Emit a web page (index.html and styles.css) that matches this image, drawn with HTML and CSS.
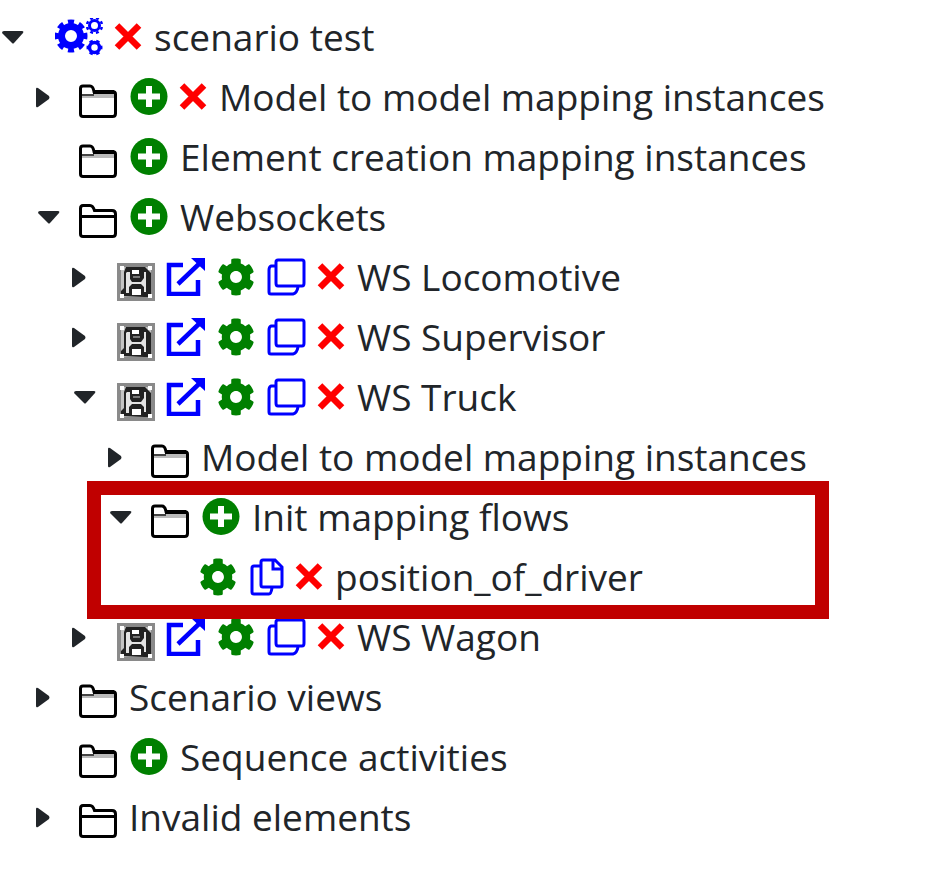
FILE: index.html
```html
<!DOCTYPE html>
<html lang="en">
<head>
  <meta charset="UTF-8" />
  <meta name="viewport" content="width=device-width, initial-scale=1.0" />
  <title>Scenario</title>
  <link rel="stylesheet" href="styles.css">
</head>
<body>
  <!-- icon sprite -->
  <svg class="sprite" aria-hidden="true">
    <symbol id="down" viewBox="0 0 22 13"><path d="M0 2Q0 0 2 0H20Q22 0 21 2L12 12Q11 13 10 12Z"/></symbol>
    <symbol id="right" viewBox="0 0 14 21"><path d="M0 2Q0 0 2 1L13 9Q14 10.500 13 12L2 20Q0 21 0 19Z"/></symbol>
    <symbol id="cross" viewBox="0 0 28 38"><path d="M3 7.500L25 29.500M25 7.500L3 29.500" fill="none" stroke="currentColor" stroke-width="6.500"/></symbol>
    <symbol id="plus" viewBox="0 0 40 38"><circle cx="21" cy="18.500" r="18.500"/><path d="M21 8V29M10 18.500H32" stroke="#fff" stroke-width="6"/></symbol>
    <symbol id="cog" viewBox="0 0 512 512"><path d="M487.400 315.700l-42.600-24.600c4.300-23.200 4.300-47 0-70.200l42.600-24.600c4.900-2.800 7.100-8.600 5.500-14-11.100-35.600-30-67.800-54.700-94.600-3.800-4.100-10-5.100-14.800-2.300L380.800 110c-17.900-15.400-38.500-27.300-60.800-35.100V25.800c0-5.600-3.900-10.500-9.400-11.700-36.700-8.200-74.300-7.800-109.200 0-5.500 1.200-9.400 6.100-9.400 11.700V75c-22.200 7.900-42.800 19.800-60.800 35.100L88.700 85.500c-4.900-2.800-11-1.900-14.800 2.300-24.700 26.700-43.600 58.900-54.700 94.600-1.700 5.400.6 11.200 5.500 14L67.300 221c-4.300 23.200-4.300 47 0 70.200l-42.600 24.600c-4.900 2.800-7.100 8.600-5.500 14 11.100 35.600 30 67.800 54.700 94.600 3.800 4.100 10 5.100 14.800 2.300l42.600-24.600c17.900 15.400 38.500 27.300 60.800 35.100v49.200c0 5.600 3.900 10.500 9.400 11.700 36.700 8.200 74.300 7.800 109.200 0 5.500-1.200 9.400-6.100 9.400-11.700v-49.200c22.200-7.900 42.800-19.800 60.800-35.100l42.600 24.600c4.900 2.800 11 1.900 14.800-2.300 24.700-26.700 43.600-58.900 54.700-94.600 1.500-5.500-.7-11.300-5.600-14.100zM256 336c-44.100 0-80-35.900-80-80s35.900-80 80-80 80 35.900 80 80-35.900 80-80 80z"/></symbol>
    <symbol id="cogs" viewBox="0 0 48 38">
      <g fill="none" stroke="currentColor">
        <circle cx="16" cy="18" r="9.500" stroke-width="7"/>
        <circle cx="16" cy="18" r="14" stroke-width="5" pathLength="16" stroke-dasharray="1.100 .9" stroke-dashoffset=".55"/>
        <circle cx="39.500" cy="7.500" r="5" stroke-width="3"/>
        <circle cx="39.500" cy="7.500" r="7.500" stroke-width="2.500" pathLength="16" stroke-dasharray="1 1" stroke-dashoffset="1.500"/>
        <circle cx="39.500" cy="29.500" r="5" stroke-width="3.500"/>
        <circle cx="39.500" cy="29.500" r="7" stroke-width="2" pathLength="12" stroke-dasharray="1 1" stroke-dashoffset=".5"/>
      </g>
    </symbol>
    <symbol id="folder" viewBox="0 0 38 34">
      <path d="M3 10H35V14H3Z" fill="#bbb"/>
      <path d="M1.500 30V4.500Q1.500 2 4 2H11Q14 2 15 7.500H33Q36.500 7.500 36.500 10V29.500Q36.500 32.500 33.500 32.500H4Q1.500 32.500 1.500 30Z" fill="none" stroke="#000" stroke-width="3"/>
      <path d="M14 8H35" fill="none" stroke="#000" stroke-width="4"/>
      <path d="M3 11H15" fill="none" stroke="#444" stroke-width="2"/>
    </symbol>
    <symbol id="folder-open" viewBox="0 0 38 34"><path d="M1.500 30V4.500Q1.500 1.500 4 1.500H11Q14 1.500 15.500 6.500H33Q36.500 6.500 36.500 10V29.500Q36.500 32.500 33.500 32.500H4Q1.500 32.500 1.500 30ZM2 12.500H36" fill="none" stroke="#000" stroke-width="3"/></symbol>
    <symbol id="save" viewBox="0 0 38 38">
      <path d="M0 0H38V38H0Z" fill="#8a8a8a"/>
      <path d="M4 4H34V34H4Z" fill="#c4c4c4"/>
      <path d="M9 4H28L34 10V34H27L4 33V28L7 25V9Z" fill="#222"/>
      <path d="M10 9H13V16L15 19H24L27 15V9H29V29H27V24L24 21H15L12 24V30H9V10Z" fill="#e4e4e4"/>
      <path d="M15 7H22V11H15ZM15 26H24V32H15Z" fill="#fff"/>
      <path d="M16 14H23" stroke="#777" stroke-width="2"/>
      <path d="M3 3H7V7H3ZM31 3H35V7H31ZM3 31H7V35H3ZM31 31H35V35H31Z" fill="#fff"/>
    </symbol>
    <symbol id="open" viewBox="0 0 40 38"><path d="M17 7H3V36H32V22M12 26L35 4" fill="none" stroke="currentColor" stroke-width="4.500"/><path d="M25 0H39V13Z"/></symbol>
    <symbol id="clone" viewBox="0 0 40 38"><path d="M12 2H36Q38 2 38 4V25Q38 28 36 28H12Q10 28 10 25V4Q10 2 12 2ZM9 8H5Q3 9 3 12V34Q3 36 5 36H27Q31 35 32 29" fill="none" stroke="currentColor" stroke-width="3"/></symbol>
    <symbol id="copy" viewBox="0 0 36 38"><path d="M15 2H27L34 9V27Q34 29 32 29H15Q13 29 13 27V4Q13 2 15 2ZM25 2V11H34M12 8H6Q4 8 4 10V34Q4 36 6 36H21Q23 36 24 30" fill="none" stroke="currentColor" stroke-width="3"/></symbol>
  </svg>

  <ul class="tree">
    <li>
      <div class="row">
        <button class="toggle open" aria-label="Collapse"><svg><use href="#down"/></svg></button>
        <button class="icon cogs shifted" aria-label="Run"><svg><use href="#cogs"/></svg></button>
        <button class="icon cross" aria-label="Delete"><svg><use href="#cross"/></svg></button>
        <a href="#">scenario test</a>
      </div>
      <ul>
        <li>
          <div class="row">
            <button class="toggle" aria-label="Expand"><svg><use href="#right"/></svg></button>
            <span class="icon folder"><svg><use href="#folder"/></svg></span>
            <button class="icon plus" aria-label="Add"><svg><use href="#plus"/></svg></button>
            <button class="icon cross" aria-label="Delete"><svg><use href="#cross"/></svg></button>
            <a href="#">Model to model mapping instances</a>
          </div>
        </li>
        <li>
          <div class="row">
            <span class="toggle"></span>
            <span class="icon folder"><svg><use href="#folder"/></svg></span>
            <button class="icon plus" aria-label="Add"><svg><use href="#plus"/></svg></button>
            <a href="#">Element creation mapping instances</a>
          </div>
        </li>
        <li>
          <div class="row">
            <button class="toggle open" aria-label="Collapse"><svg><use href="#down"/></svg></button>
            <span class="icon folder"><svg><use href="#folder-open"/></svg></span>
            <button class="icon plus" aria-label="Add"><svg><use href="#plus"/></svg></button>
            <a href="#">Websockets</a>
          </div>
          <ul>
            <li>
              <div class="row">
                <button class="toggle" aria-label="Expand"><svg><use href="#right"/></svg></button>
                <button class="icon save" aria-label="Save"><svg><use href="#save"/></svg></button>
                <button class="icon link" aria-label="Open"><svg><use href="#open"/></svg></button>
                <button class="icon cog" aria-label="Settings"><svg><use href="#cog"/></svg></button>
                <button class="icon link" aria-label="Clone"><svg><use href="#clone"/></svg></button>
                <button class="icon cross" aria-label="Delete"><svg><use href="#cross"/></svg></button>
                <a href="#">WS Locomotive</a>
              </div>
            </li>
            <li>
              <div class="row">
                <button class="toggle" aria-label="Expand"><svg><use href="#right"/></svg></button>
                <button class="icon save" aria-label="Save"><svg><use href="#save"/></svg></button>
                <button class="icon link" aria-label="Open"><svg><use href="#open"/></svg></button>
                <button class="icon cog" aria-label="Settings"><svg><use href="#cog"/></svg></button>
                <button class="icon link" aria-label="Clone"><svg><use href="#clone"/></svg></button>
                <button class="icon cross" aria-label="Delete"><svg><use href="#cross"/></svg></button>
                <a href="#">WS Supervisor</a>
              </div>
            </li>
            <li>
              <div class="row">
                <button class="toggle open" aria-label="Collapse"><svg><use href="#down"/></svg></button>
                <button class="icon save" aria-label="Save"><svg><use href="#save"/></svg></button>
                <button class="icon link" aria-label="Open"><svg><use href="#open"/></svg></button>
                <button class="icon cog" aria-label="Settings"><svg><use href="#cog"/></svg></button>
                <button class="icon link" aria-label="Clone"><svg><use href="#clone"/></svg></button>
                <button class="icon cross" aria-label="Delete"><svg><use href="#cross"/></svg></button>
                <a href="#">WS Truck</a>
              </div>
              <ul>
                <li>
                  <div class="row">
                    <button class="toggle" aria-label="Expand"><svg><use href="#right"/></svg></button>
                    <span class="icon folder"><svg><use href="#folder"/></svg></span>
                    <a href="#">Model to model mapping instances</a>
                  </div>
                </li>
                <li class="marked">
                  <div class="row">
                    <button class="toggle open" aria-label="Collapse"><svg><use href="#down"/></svg></button>
                    <span class="icon folder"><svg><use href="#folder"/></svg></span>
                    <button class="icon plus" aria-label="Add"><svg><use href="#plus"/></svg></button>
                    <a href="#">Init mapping flows</a>
                  </div>
                  <ul>
                    <li>
                      <div class="row">
                        <span class="toggle"></span>
                        <button class="icon cog shifted" aria-label="Settings"><svg><use href="#cog"/></svg></button>
                        <button class="icon copy" aria-label="Copy"><svg><use href="#copy"/></svg></button>
                        <button class="icon cross" aria-label="Delete"><svg><use href="#cross"/></svg></button>
                        <a href="#">position_of_driver</a>
                      </div>
                    </li>
                  </ul>
                </li>
              </ul>
            </li>
            <li>
              <div class="row">
                <button class="toggle" aria-label="Expand"><svg><use href="#right"/></svg></button>
                <button class="icon save" aria-label="Save"><svg><use href="#save"/></svg></button>
                <button class="icon link" aria-label="Open"><svg><use href="#open"/></svg></button>
                <button class="icon cog" aria-label="Settings"><svg><use href="#cog"/></svg></button>
                <button class="icon link" aria-label="Clone"><svg><use href="#clone"/></svg></button>
                <button class="icon cross" aria-label="Delete"><svg><use href="#cross"/></svg></button>
                <a href="#">WS Wagon</a>
              </div>
            </li>
          </ul>
        </li>
        <li>
          <div class="row">
            <button class="toggle" aria-label="Expand"><svg><use href="#right"/></svg></button>
            <span class="icon folder"><svg><use href="#folder"/></svg></span>
            <a href="#">Scenario views</a>
          </div>
        </li>
        <li>
          <div class="row">
            <span class="toggle"></span>
            <span class="icon folder"><svg><use href="#folder"/></svg></span>
            <button class="icon plus" aria-label="Add"><svg><use href="#plus"/></svg></button>
            <a href="#">Sequence activities</a>
          </div>
        </li>
        <li>
          <div class="row">
            <button class="toggle" aria-label="Expand"><svg><use href="#right"/></svg></button>
            <span class="icon folder"><svg><use href="#folder-open"/></svg></span>
            <a href="#">Invalid elements</a>
          </div>
        </li>
      </ul>
    </li>
  </ul>
</body>
</html>
```
FILE: styles.css
```css
* {
  margin: 0;
  padding: 0;
  box-sizing: border-box;
}

body {
  background: #fff;
  color: #212529;
  font-family: "Open Sans", "Noto Sans", sans-serif;
  font-size: 37px;
  line-height: 58px;
}

.sprite {
  display: none;
}

.tree {
  padding-top: 8px;
}

ul {
  list-style: none;
}

ul ul {
  padding-left: 36px;
}

.row {
  display: flex;
  align-items: center;
  height: 60px;
  padding-bottom: 2px;
  white-space: nowrap;
}

.row a {
  padding-left: 1px;
  color: inherit;
  text-decoration: none;
}

button {
  border: none;
  background: none;
  color: inherit;
  cursor: pointer;
}

svg {
  display: block;
  width: 100%;
  height: 100%;
  fill: currentColor;
}

.toggle {
  flex: none;
  width: 43px;
}

.toggle svg {
  width: 14px;
  height: 21px;
}

.toggle.open svg {
  width: 22px;
  height: 13px;
  margin-left: 2px;
}

.icon {
  flex: none;
  width: 38px;
  height: 38px;
  margin-right: 11px;
}

.icon.shifted {
  margin-left: 12px;
}

.icon.folder {
  height: 34px;
  margin-top: 8px;
}

.icon.save {
  margin-top: 10px;
  margin-left: 2px;
}

.icon.cogs {
  width: 48px;
  color: #00f;
}

.icon.link {
  width: 40px;
  color: #00f;
}

.icon.copy {
  width: 36px;
  color: #00f;
}

.icon.plus {
  width: 40px;
  color: #008000;
}

.icon.cog {
  color: #008000;
}

.icon.cross {
  width: 28px;
  color: #f00;
}

/* red frame drawn over the branch */
.marked {
  position: relative;
}

.marked::after {
  content: "";
  position: absolute;
  top: -7px;
  bottom: -11px;
  left: -21px;
  box-sizing: border-box;
  width: 742px;
  border: 14px solid #c00000;
  pointer-events: none;
}
```
